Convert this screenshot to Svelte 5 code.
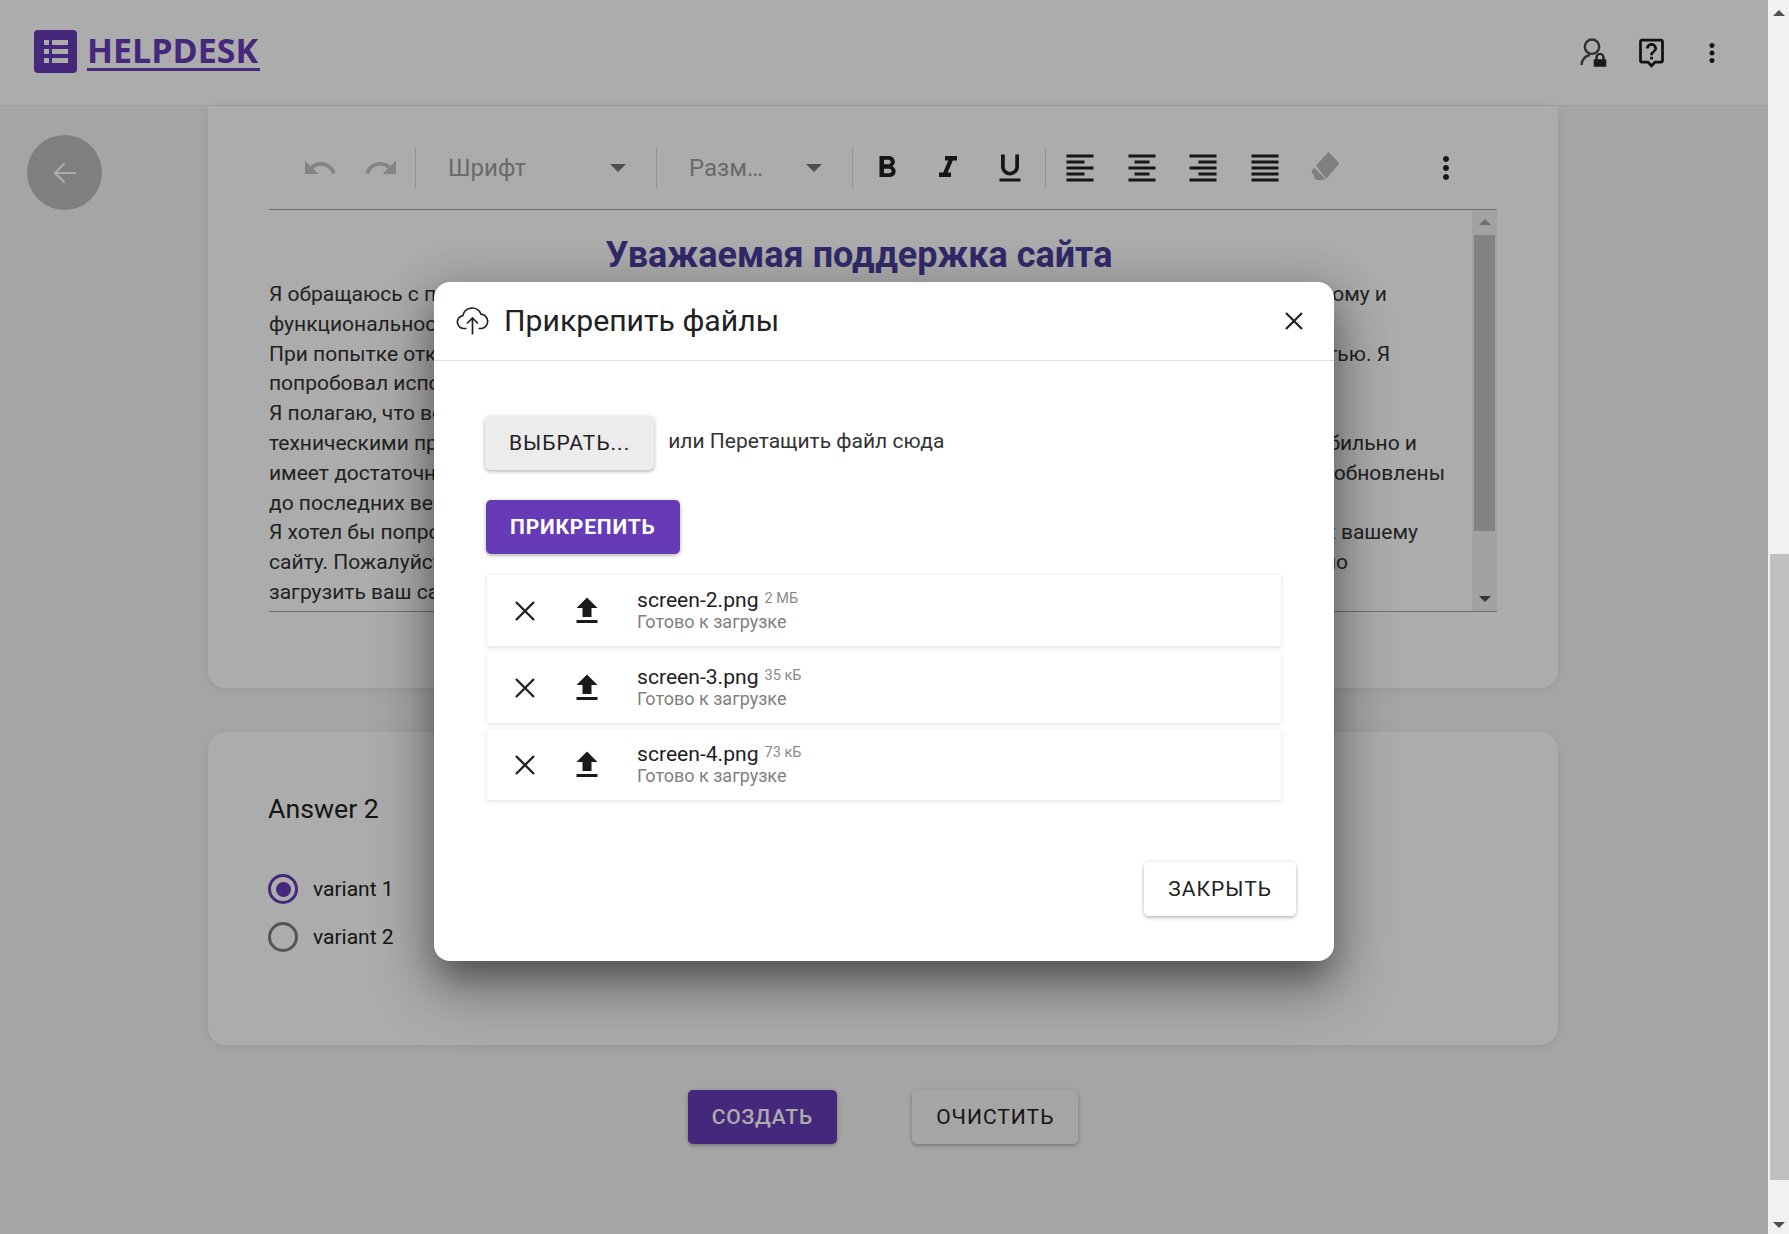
<script lang="ts">
  const lines = [
    { w: 1118, left: 'Я обращаюсь с просьбой о помощи в связи с возникшей проблемой доступа к сайту и его', right: 'ому и' },
    { w: 0, left: 'функциональности, которая мешает мне пользоваться сервисом.', right: '' },
    { w: 1121, left: 'При попытке открыть страницу появляется сообщение об ошибке, и она загружается с', right: 'тью. Я' },
    { w: 0, left: 'попробовал использовать другой браузер и очистить кэш, но это не помогло.', right: '' },
    { w: 0, left: 'Я полагаю, что возникшая проблема может быть связана с', right: '' },
    { w: 1148, left: 'техническими проблемами на стороне сервера, так как моё соединение работает', right: 'бильно и' },
    { w: 1176, left: 'имеет достаточную скорость, а все используемые мной программы и браузеры', right: 'обновлены' },
    { w: 0, left: 'до последних версий.', right: '' },
    { w: 1149, left: 'Я хотел бы попросить вас проверить эту проблему и восстановить мой доступ', right: 'к вашему' },
    { w: 1079, left: 'сайту. Пожалуйста, сообщите мне, если потребуются дополнительные данные, чтобы мо', right: 'но' },
    { w: 0, left: 'загрузить ваш сайт без ошибок.', right: '' }
  ];

  const files = [
    { name: 'screen-2.png', size: '2 МБ' },
    { name: 'screen-3.png', size: '35 кБ' },
    { name: 'screen-4.png', size: '73 кБ' }
  ];

  const alignIcons = [
    'M15 15H3v2h12v-2zm0-8H3v2h12V7zM3 13h18v-2H3v2zm0 8h18v-2H3v2zM3 3v2h18V3H3z',
    'M7 15v2h10v-2H7zm-4 6h18v-2H3v2zm0-8h18v-2H3v2zm4-6v2h10V7H7zM3 3v2h18V3H3z',
    'M3 21h18v-2H3v2zm6-4h12v-2H9v2zm-6-4h18v-2H3v2zm6-4h12V7H9v2zM3 3v2h18V3H3z',
    'M3 21h18v-2H3v2zm0-4h18v-2H3v2zm0-4h18v-2H3v2zm0-4h18V7H3v2zm0-6v2h18V3H3z'
  ];

  const moreVert = 'M12 8c1.1 0 2-.9 2-2s-.9-2-2-2-2 .9-2 2 .9 2 2 2zm0 2c-1.1 0-2 .9-2 2s.9 2 2 2 2-.9 2-2-.9-2-2-2zm0 6c-1.1 0-2 .9-2 2s.9 2 2 2 2-.9 2-2-.9-2-2-2z';
</script>

<div class="root">
  <div class="viewport">
    <header class="topbar">
      <div class="logo">
        <span class="logo-mark">
          <svg viewBox="0 0 43 43" width="43" height="43">
            <path fill="#fff" d="M10 10h5v5h-5zM18 10h16v5H18zM10 19h5v5h-5zM18 19h16v5H18zM10 28h5v5h-5zM18 28h16v5H18z" />
          </svg>
        </span>
        <span class="logo-text">HELPDESK</span>
      </div>
      <div class="topbar-icons">
        <svg class="user-lock" viewBox="0 0 28 32" width="28" height="32">
          <circle cx="13" cy="10.7" r="7.2" fill="none" stroke="#4a4a4a" stroke-width="2.4" />
          <path d="M2.500 29C3 24 6 20 11 19" fill="none" stroke="#4a4a4a" stroke-width="2.4" />
          <rect x="14.700" y="23.300" width="12.600" height="7.400" rx="1" fill="#2a2a2a" />
          <path d="M17.500 24v-2.500a3.500 3.500 0 0 1 7 0V24" fill="none" stroke="#2a2a2a" stroke-width="2.200" />
        </svg>
        <svg class="help" viewBox="0 0 24 24" width="33" height="33">
          <path fill="#1c1c1c" d="M19 2H5c-1.110 0-2 .9-2 2v14c0 1.100.89 2 2 2h4l3 3 3-3h4c1.100 0 2-.9 2-2V4c0-1.100-.9-2-2-2zm0 16h-4.830l-.59.59L12 20.170l-1.590-1.590-.58-.58H5V4h14v14zm-8-3h2v2h-2zm1-8c1.100 0 2 .9 2 2 0 2-3 1.750-3 5h2c0-2.250 3-2.500 3-5 0-2.210-1.790-4-4-4S8 6.790 8 9h2c0-1.100.9-2 2-2z" />
        </svg>
        <svg class="more" viewBox="0 0 24 24" width="30" height="30"><path fill="#1c1c1c" d={moreVert} /></svg>
      </div>
    </header>

    <button class="back" aria-label="back">
      <svg viewBox="0 0 24 22" width="24" height="22">
        <path d="M23 11H2.500M11.500 1.500 2 11l9.500 9.500" fill="none" stroke="#fff" stroke-width="2.200" />
      </svg>
    </button>

    <main class="page">
      <section class="card editor-card">
        <div class="toolbar">
          <button class="tool muted" aria-label="undo">
            <svg viewBox="0 0 24 24"><path d="M12.500 8c-2.650 0-5.050.99-6.900 2.600L2 7v9h9l-3.620-3.620c1.390-1.160 3.160-1.880 5.120-1.880 3.540 0 6.550 2.310 7.600 5.500l2.370-.78C21.080 11.030 17.150 8 12.500 8z" /></svg>
          </button>
          <button class="tool muted" aria-label="redo">
            <svg viewBox="0 0 24 24"><path d="M18.400 10.600C16.550 8.990 14.150 8 11.500 8c-4.650 0-8.580 3.030-9.960 7.220L3.900 16c1.050-3.190 4.050-5.500 7.600-5.500 1.950 0 3.730.72 5.120 1.880L13 16h9V7l-3.600 3.600z" /></svg>
          </button>
          <i class="sep"></i>
          <div class="select font-select"><span>Шрифт</span><b class="caret"></b></div>
          <i class="sep"></i>
          <div class="select size-select"><span>Разм…</span><b class="caret"></b></div>
          <i class="sep"></i>
          <button class="tool" aria-label="bold">
            <svg viewBox="0 0 24 24"><path d="M15.600 10.790c.97-.67 1.650-1.770 1.650-2.790 0-2.260-1.750-4-4-4H7v14h7.040c2.090 0 3.710-1.700 3.710-3.790 0-1.520-.86-2.820-2.150-3.420zM10 6.500h3c.83 0 1.500.67 1.500 1.500s-.67 1.500-1.500 1.500h-3v-3zm3.500 9H10v-3h3.500c.83 0 1.500.67 1.500 1.500s-.67 1.500-1.500 1.500z" /></svg>
          </button>
          <button class="tool" aria-label="italic">
            <svg viewBox="0 0 24 24"><path d="M10 4v3h2.210l-3.420 8H6v3h8v-3h-2.210l3.420-8H18V4z" /></svg>
          </button>
          <button class="tool" aria-label="underline">
            <svg viewBox="0 0 24 24"><path d="M12 17c3.310 0 6-2.690 6-6V3h-2.500v8c0 1.930-1.570 3.500-3.500 3.500S8.500 12.930 8.500 11V3H6v8c0 3.310 2.690 6 6 6zm-7 2v2h14v-2H5z" /></svg>
          </button>
          <i class="sep wide"></i>
          {#each alignIcons as d}
            <button class="tool" aria-label="align"><svg viewBox="0 0 24 24"><path {d} /></svg></button>
          {/each}
          <button class="tool eraser" aria-label="clear">
            <svg viewBox="0 0 36 36">
              <path d="M20.300 3.300 30 13.300 18.300 27.300 9.300 15.700z" stroke="#bdbdbd" stroke-width="2" stroke-linejoin="round" />
              <path d="M3.300 21 6.300 17.700 17.700 29.300 13 30H7.700z" />
            </svg>
          </button>
          <button class="tool more-tool" aria-label="more"><svg viewBox="0 0 24 24"><path d={moreVert} /></svg></button>
        </div>

        <div class="editor">
          <div class="editor-text">
            <h2>Уважаемая поддержка сайта</h2>
            {#each lines as line}
              <div class="line" style={line.w ? `width: ${line.w}px` : ''}>
                <span class="line-left">{line.left}</span>
                {#if line.right}<span class="line-right">{line.right}</span>{/if}
              </div>
            {/each}
          </div>
          <div class="editor-scroll">
            <b class="arrow up"></b>
            <div class="editor-thumb"></div>
            <b class="arrow down"></b>
          </div>
        </div>
      </section>

      <section class="card answer-card">
        <h3>Answer 2</h3>
        <label class="radio"><span class="ring checked"></span>variant 1</label>
        <label class="radio"><span class="ring"></span>variant 2</label>
      </section>

      <div class="actions">
        <button class="btn primary dim">Создать</button>
        <button class="btn plain">Очистить</button>
      </div>
    </main>

    <div class="overlay">
      <div class="modal">
        <div class="modal-head">
          <svg class="cloud" viewBox="0 0 34 28" width="34" height="28">
            <path d="M10.500 21.500H8a6.500 6.500 0 0 1-1.200-12.900A9.500 9.500 0 0 1 25 7.200a7.200 7.200 0 0 1 .5 14.300h-3" fill="none" stroke="#222" stroke-width="1.700" />
            <path d="M16.500 27.500V11.500M11 16.500l5.500-5.500 5.500 5.500" fill="none" stroke="#222" stroke-width="1.700" />
          </svg>
          <h2>Прикрепить файлы</h2>
          <button class="icon-close" aria-label="close">
            <svg viewBox="0 0 20 20" width="20" height="20"><path d="M2 2l16 16M18 2 2 18" stroke="#222" stroke-width="2.200" fill="none" /></svg>
          </button>
        </div>
        <div class="modal-body">
          <div class="choose-row">
            <button class="btn choose">Выбрать...</button>
            <span>или Перетащить файл сюда</span>
          </div>
          <button class="btn primary attach">Прикрепить</button>
          <div class="files">
            {#each files as file}
              <div class="file">
                <svg class="file-x" viewBox="0 0 22 22" width="22" height="22"><path d="M2 2l18 18M20 2 2 20" stroke="#222" stroke-width="2.400" fill="none" /></svg>
                <svg class="file-up" viewBox="0 0 24 24" width="36" height="36"><path fill="#1a1a1a" d="M9 16h6v-6h4l-7-7-7 7h4zm-4 2h14v2H5z" /></svg>
                <div class="file-info">
                  <div class="file-name">{file.name}<small>{file.size}</small></div>
                  <div class="file-status">Готово к загрузке</div>
                </div>
              </div>
            {/each}
          </div>
        </div>
        <div class="modal-foot">
          <button class="btn close-btn">Закрыть</button>
        </div>
      </div>
    </div>
  </div>

  <aside class="scrollbar">
    <b class="arrow up"></b>
    <div class="thumb"></div>
    <b class="arrow down"></b>
  </aside>
</div>

<style>
  :global(body) {
    margin: 0;
    font-family: Roboto, "Noto Sans", sans-serif;
    color: #212121;
    background: #f5f5f5;
  }

  button {
    font-family: inherit;
    cursor: pointer;
  }

  .root {
    display: flex;
    height: 1234px;
    overflow: hidden;
  }

  .viewport {
    position: relative;
    flex: 1;
    min-width: 0;
    overflow: hidden;
  }

  .topbar {
    height: 106px;
    box-sizing: border-box;
    border-bottom: 1px solid #ececec;
    background: #fff;
    display: flex;
    align-items: center;
    justify-content: space-between;
    padding: 0 41px 0 34px;
  }

  .logo {
    display: flex;
    gap: 10px;
    align-items: center;
    margin-top: -3px;
  }

  .logo-mark {
    width: 43px;
    height: 43px;
    background: #673ab7;
    border-radius: 4px;
    display: block;
  }

  .logo-mark svg {
    display: block;
  }

  .logo-text {
    font-family: "Open Sans", sans-serif;
    font-weight: 700;
    font-size: 34px;
    line-height: 36px;
    color: #673ab7;
    border-bottom: 3px solid #673ab7;
    padding: 2px 2px 0 0;
    margin-top: -2px;
  }

  .topbar-icons {
    display: flex;
    align-items: center;
  }

  .user-lock {
    margin-right: 28px;
    margin-top: -2px;
  }

  .help {
    margin-right: 29px;
  }

  .back {
    position: absolute;
    left: 27px;
    top: 135px;
    width: 75px;
    height: 75px;
    border: 0;
    border-radius: 50%;
    background: #bdbdbd;
    display: grid;
    place-items: center;
    padding: 0;
  }

  .page {
    padding: 0 210px 0 208px;
  }

  .card {
    background: #fff;
    border-radius: 18px;
    box-shadow: 0 2px 10px rgba(0, 0, 0, 0.08);
    box-sizing: border-box;
  }

  .editor-card {
    height: 582px;
    border-radius: 0 0 18px 18px;
    padding: 0 61px;
  }

  .toolbar {
    height: 104px;
    box-sizing: border-box;
    border-bottom: 1px solid #a6a6a6;
    display: flex;
    align-items: center;
    padding: 20px 0 0 20px;
  }

  .tool {
    width: 61.5px;
    height: 36px;
    flex: none;
    border: 0;
    background: none;
    padding: 0;
    display: grid;
    place-items: center;
  }

  .tool svg {
    width: 36px;
    height: 36px;
    fill: #212121;
  }

  .tool.muted svg {
    fill: #c4c4c4;
  }

  .tool.eraser svg {
    fill: #bdbdbd;
  }

  .more-tool {
    margin-left: 58px;
  }

  .sep {
    width: 1px;
    height: 42px;
    background: #dcdcdc;
    flex: none;
    margin: 0 3px;
  }

  .sep.wide {
    margin: 0 4px;
  }

  .select {
    display: flex;
    align-items: center;
    justify-content: space-between;
    box-sizing: border-box;
    font-size: 24px;
    color: #9e9e9e;
    flex: none;
    height: 42px;
  }

  .font-select {
    width: 234px;
    padding: 0 27px 0 29px;
  }

  .size-select {
    width: 189px;
    padding: 0 27px 0 29px;
  }

  .caret {
    width: 0;
    height: 0;
    border-left: 8px solid transparent;
    border-right: 8px solid transparent;
    border-top: 8px solid #757575;
  }

  .editor {
    height: 402px;
    box-sizing: border-box;
    display: flex;
    border-bottom: 1px solid #a6a6a6;
  }

  .editor-text {
    flex: 1;
    min-width: 0;
    padding-right: 23px;
    overflow: hidden;
    font-size: 21px;
    line-height: 29.8px;
    color: #333;
  }

  .editor-text h2 {
    margin: 21px 0 1px;
    text-align: center;
    font-size: 36px;
    line-height: 48px;
    font-weight: 700;
    color: #4a3d9e;
  }

  .line {
    display: flex;
    justify-content: space-between;
    white-space: nowrap;
  }

  .line-left {
    flex: 1;
    min-width: 0;
    overflow: hidden;
  }

  .line-right {
    flex: none;
  }

  .editor-scroll {
    width: 25px;
    flex: none;
    background: #f1f1f1;
    display: flex;
    flex-direction: column;
    align-items: center;
    padding-top: 9px;
    box-sizing: border-box;
  }

  .editor-thumb {
    width: 21px;
    height: 296px;
    background: #c1c1c1;
    margin-top: 10px;
  }

  .arrow {
    width: 0;
    height: 0;
    border-left: 6px solid transparent;
    border-right: 6px solid transparent;
    flex: none;
  }

  .arrow.up {
    border-bottom: 6px solid #a3a3a3;
  }

  .arrow.down {
    border-top: 6px solid #505050;
    margin-top: auto;
    margin-bottom: 9px;
  }

  .answer-card {
    height: 313px;
    margin-top: 44px;
    padding: 57px 60px 0;
  }

  .answer-card h3 {
    margin: 0 0 45px;
    font-size: 26.7px;
    line-height: 40px;
    font-weight: 400;
  }

  .radio {
    display: flex;
    align-items: center;
    gap: 15px;
    height: 30px;
    margin-bottom: 18px;
    font-size: 21px;
  }

  .ring {
    width: 30px;
    height: 30px;
    box-sizing: border-box;
    border: 3px solid #7d7d7d;
    border-radius: 50%;
    display: block;
    position: relative;
  }

  .ring.checked {
    border-color: #673ab7;
  }

  .ring.checked::after {
    content: '';
    position: absolute;
    inset: 4.500px;
    border-radius: 50%;
    background: #673ab7;
  }

  .actions {
    display: flex;
    justify-content: center;
    gap: 75px;
    margin-top: 45px;
  }

  .btn {
    height: 54px;
    border: 0;
    border-radius: 5px;
    padding: 0 24px;
    font-size: 21px;
    font-weight: 450;
    letter-spacing: 1px;
    text-transform: uppercase;
    background: #fff;
    color: #212121;
    box-shadow: 0 1px 5px rgba(0, 0, 0, 0.2), 0 2px 3px rgba(0, 0, 0, 0.12);
  }

  .btn.primary {
    background: #673ab7;
    color: #fff;
    font-weight: 500;
    letter-spacing: 0.85px;
  }

  .btn.plain {
    background: #f5f5f5;
  }

  .overlay {
    position: absolute;
    inset: 0;
    background: rgba(0, 0, 0, 0.325);
    display: flex;
    justify-content: center;
    align-items: flex-start;
    padding-top: 282px;
    box-sizing: border-box;
  }

  .modal {
    width: 900px;
    height: 679px;
    background: #fff;
    border-radius: 16px;
    box-shadow: 0 20px 30px -8px rgba(0, 0, 0, 0.3), 0 30px 60px 6px rgba(0, 0, 0, 0.22), 0 9px 46px 8px rgba(0, 0, 0, 0.16);
    display: flex;
    flex-direction: column;
  }

  .modal-head {
    height: 79px;
    box-sizing: border-box;
    border-bottom: 1px solid #e0e0e0;
    display: flex;
    align-items: center;
    padding: 0 24px 0 22px;
  }

  .cloud {
    margin-right: 14px;
  }

  .modal-head h2 {
    margin: 0;
    flex: 1;
    font-size: 30.2px;
    font-weight: 450;
    line-height: 40px;
  }

  .icon-close {
    border: 0;
    background: none;
    padding: 0;
    width: 20px;
    height: 20px;
    margin-right: 6px;
  }

  .modal-body {
    flex: 1;
    padding: 55px 53px 0 53px;
  }

  .choose-row {
    display: flex;
    align-items: center;
    gap: 14px;
    font-size: 21px;
    color: #333;
    margin-left: -2px;
  }

  .choose-row span {
    margin-top: -5px;
  }

  .btn.choose {
    background: #ececec;
  }

  .btn.attach {
    display: block;
    margin: 30px 0 0 -1px;
    font-weight: 700;
    letter-spacing: 0.8px;
  }

  .files {
    margin-top: 21px;
    display: flex;
    flex-direction: column;
    gap: 6px;
  }

  .file {
    height: 71px;
    box-sizing: border-box;
    display: flex;
    align-items: center;
    background: #fff;
    box-shadow: 0 1px 4px rgba(0, 0, 0, 0.14);
    padding-left: 27px;
  }

  .file-up {
    margin-left: 33px;
    margin-right: 32px;
  }

  .file-info {
    display: flex;
    flex-direction: column;
  }

  .file-name {
    font-size: 21.1px;
    line-height: 24px;
    font-weight: 450;
    display: flex;
    align-items: flex-start;
    color: #212121;
  }

  .file-name small {
    font-size: 14.500px;
    line-height: 21px;
    font-weight: 400;
    color: #8a8a8a;
    margin-left: 6px;
  }

  .file-status {
    font-size: 18px;
    line-height: 22px;
    margin-top: -1px;
    color: #808080;
  }

  .modal-foot {
    padding: 0 38px 45px 0;
    display: flex;
    justify-content: flex-end;
  }

  .scrollbar {
    width: 21px;
    flex: none;
    background: #f1f1f1;
    display: flex;
    flex-direction: column;
    align-items: center;
    padding-top: 10px;
    box-sizing: border-box;
    position: relative;
  }

  .scrollbar .arrow.up {
    border-bottom-color: #505050;
  }

  .scrollbar .thumb {
    position: absolute;
    top: 554px;
    left: 2px;
    right: 0;
    height: 626px;
    background: #c1c1c1;
  }

  .scrollbar .arrow.down {
    margin-bottom: 6px;
  }
</style>
